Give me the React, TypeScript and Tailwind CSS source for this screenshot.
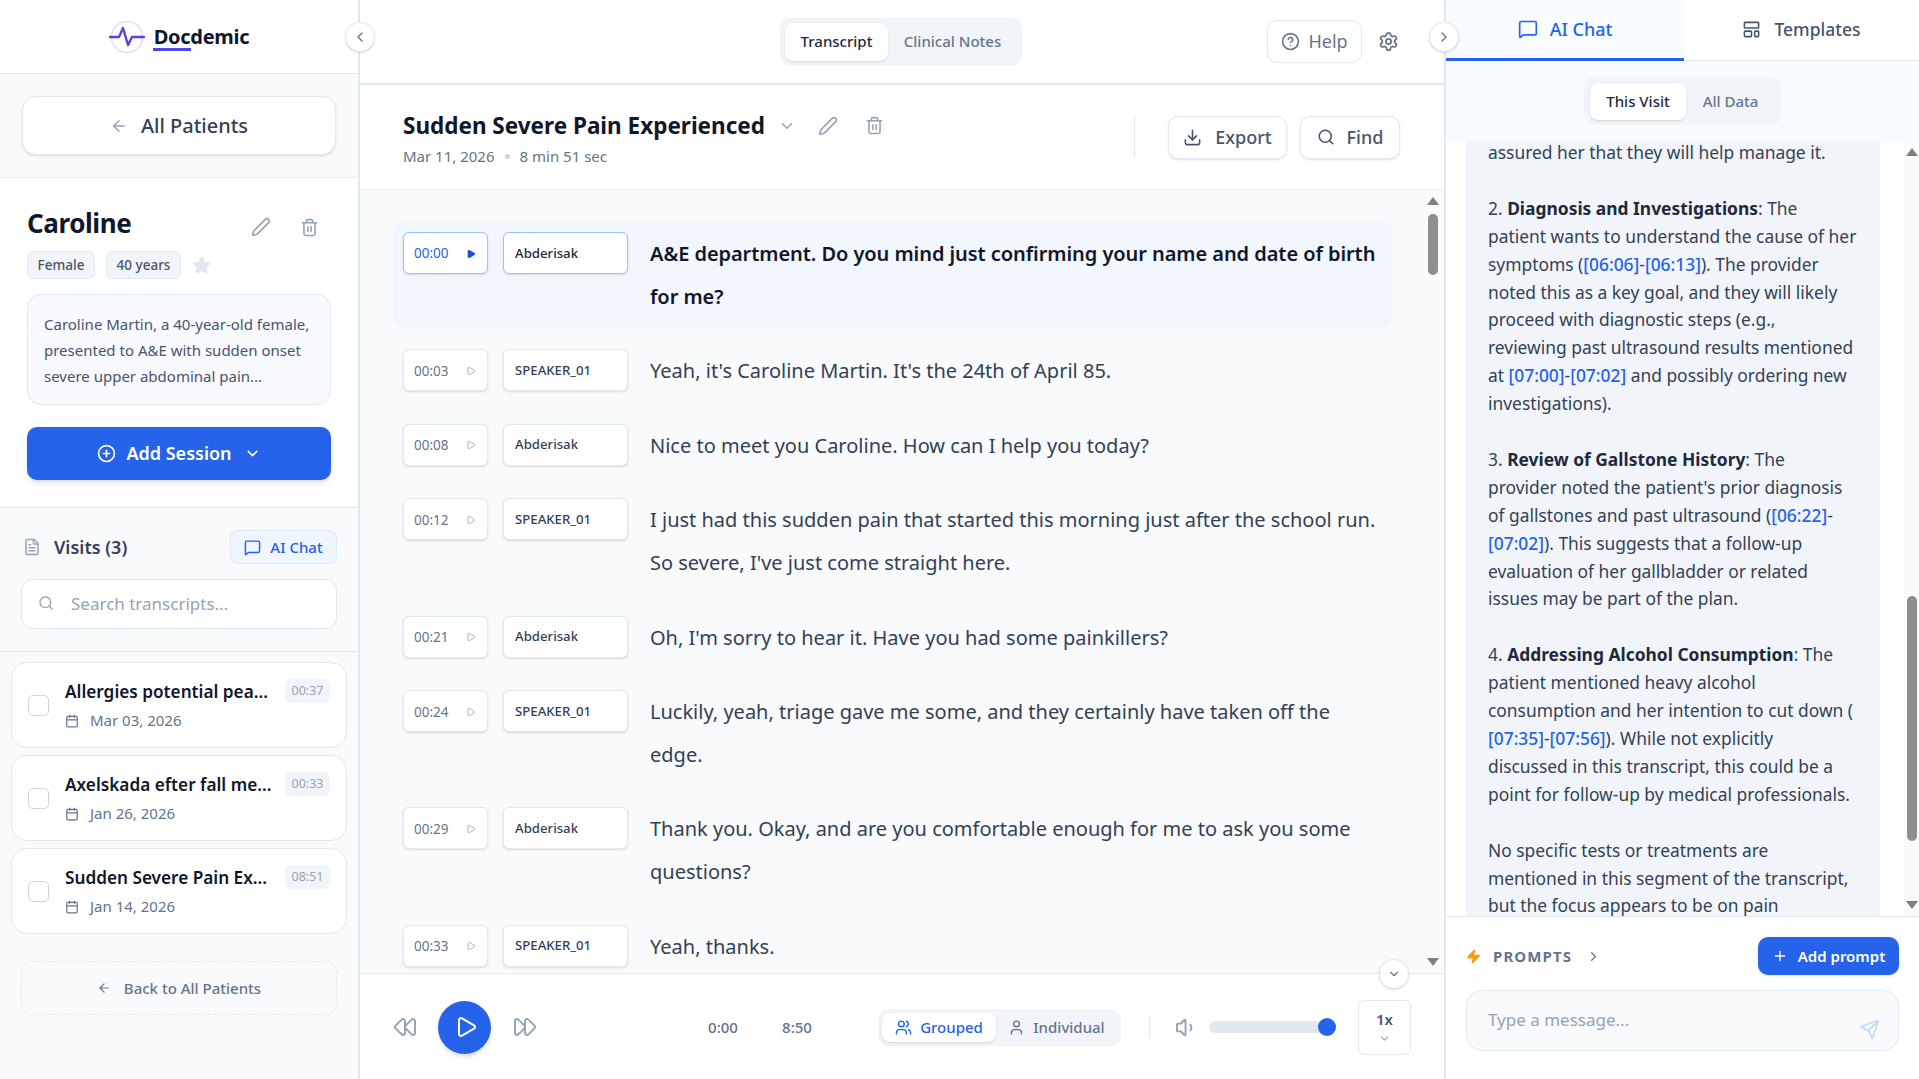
import React from 'react';
import {
  ArrowLeft, Pen, Trash2, Star, CirclePlus, ChevronDown, ChevronLeft, ChevronRight, FileText, MessageSquare, Search,
  Calendar, CircleHelp, Settings, Download, Play, Rewind, FastForward, Users, User, Volume1, LayoutTemplate, Zap, Plus, Send,
} from 'lucide-react';

const visits = [
  { title: 'Allergies potential pea…', date: 'Mar 03, 2026', dur: '00:37' },
  { title: 'Axelskada efter fall me…', date: 'Jan 26, 2026', dur: '00:33' },
  { title: 'Sudden Severe Pain Ex…', date: 'Jan 14, 2026', dur: '08:51' },
];

const rows = [
  { t: '00:00', s: 'Abderisak', x: 'A&E department. Do you mind just confirming your name and date of birth\nfor me?', active: true },
  { t: '00:03', s: 'SPEAKER_01', x: "Yeah, it's Caroline Martin. It's the 24th of April 85." },
  { t: '00:08', s: 'Abderisak', x: 'Nice to meet you Caroline. How can I help you today?' },
  { t: '00:12', s: 'SPEAKER_01', x: "I just had this sudden pain that started this morning just after the school run.\nSo severe, I've just come straight here." },
  { t: '00:21', s: 'Abderisak', x: "Oh, I'm sorry to hear it. Have you had some painkillers?" },
  { t: '00:24', s: 'SPEAKER_01', x: 'Luckily, yeah, triage gave me some, and they certainly have taken off the\nedge.' },
  { t: '00:29', s: 'Abderisak', x: 'Thank you. Okay, and are you comfortable enough for me to ask you some\nquestions?' },
  { t: '00:33', s: 'SPEAKER_01', x: 'Yeah, thanks.' },
];

const Ref = ({ children }: { children: React.ReactNode }) => (
  <span className="text-[#2563eb] font-medium">{children}</span>
);

const FakeScrollbar = ({ thumbTop, thumbH }: { thumbTop: number; thumbH: number }) => (
  <div className="w-[15px] shrink-0 flex flex-col items-center py-[7px] bg-[#fafafa]">
    <div className="w-0 h-0 border-x-[6px] border-x-transparent border-b-[8px] border-b-[#7f7f7f]" />
    <div className="flex-1 w-full flex flex-col items-center">
      <div style={{ height: thumbTop }} />
      <div className="w-[10px] rounded-full bg-[#8f8f8f]" style={{ height: thumbH }} />
    </div>
    <div className="w-0 h-0 border-x-[6px] border-x-transparent border-t-[8px] border-t-[#7f7f7f]" />
  </div>
);

const Sidebar = () => (
  <aside className="w-[360px] shrink-0 h-full flex flex-col border-r-2 border-[#e2e8f0] bg-[#f8fafc]">
    <div className="h-[74px] shrink-0 bg-white border-b border-[#e2e8f0] flex items-center justify-center gap-[9px]">
      <svg width="36" height="36" viewBox="0 0 36 36" fill="none">
        <circle cx="18" cy="18" r="15.5" stroke="#e0dcfb" strokeWidth="1.5" />
        <path d="M1 18h9l4-9 5 17 4-8h12" stroke="#4f46e5" strokeWidth="2.4" strokeLinejoin="round" strokeLinecap="round" />
      </svg>
      <div className="flex flex-col">
        <span className="text-[20px] leading-[28px] font-bold text-[#0f172a] tracking-[-0.3px]">Docdemic</span>
        <div className="w-[38px] h-[3px] bg-[#4f46e5] -mt-[3px] -ml-[1px]" />
      </div>
    </div>
    <div className="h-[104px] shrink-0 border-b border-[#e8edf3] px-[22px] flex items-center">
      <button className="w-full h-[59px] rounded-[14px] bg-white border border-[#e2e8f0] shadow-sm flex items-center justify-center gap-[13px] text-[20px] font-medium text-[#334155]">
        <ArrowLeft size={18} className="text-[#94a3b8]" />
        All Patients
      </button>
    </div>
    <div className="h-[330px] shrink-0 bg-white border-b border-[#e2e8f0] px-[27px] pt-[27px]">
      <div className="flex items-center justify-between pr-[12px]">
        <h1 className="text-[26px] leading-[36px] font-bold text-[#0f172a] tracking-[-0.4px]">Caroline</h1>
        <div className="flex items-center gap-[29px] text-[#94a3b8] mt-[8px]">
          <Pen size={20} />
          <Trash2 size={19} />
        </div>
      </div>
      <div className="flex items-center gap-[11px] mt-[10px]">
        <span className="h-[28px] w-[68px] justify-center flex items-center rounded-md bg-[#f1f5f9] border border-[#e2e8f0] text-[13.5px] text-[#475569] font-medium">Female</span>
        <span className="h-[28px] w-[75px] justify-center flex items-center rounded-md bg-[#f1f5f9] border border-[#e2e8f0] text-[13.5px] text-[#475569] font-medium">40 years</span>
        <Star size={19} className="text-[#e2e8f0] fill-[#e2e8f0]" />
      </div>
      <div className="mt-[15px] h-[111px] rounded-[14px] border border-[#e2e8f0] bg-[#f8faff] px-[16px] pt-[16px] text-[15px] leading-[26px] text-[#475569]">
        Caroline Martin, a 40-year-old female, presented to A&amp;E with sudden onset severe upper abdominal pain...
      </div>
      <button className="mt-[22px] w-full h-[53px] rounded-[10px] bg-[#2563eb] shadow-md flex items-center justify-center gap-[10px] text-white text-[18px] font-semibold">
        <CirclePlus size={19} />
        <span className="mr-[2px]">Add Session</span>
        <ChevronDown size={17} />
      </button>
    </div>
    <div className="h-[144px] shrink-0 border-b border-[#e2e8f0] px-[21px] pt-[22px]">
      <div className="flex items-center justify-between h-[34px]">
        <div className="flex items-center gap-[13px] pl-[2px]">
          <FileText size={18} className="text-[#94a3b8]" />
          <span className="text-[18px] font-semibold text-[#334155]">Visits (3)</span>
        </div>
        <button className="h-[34px] w-[107px] rounded-lg border border-[#dbeafe] bg-[#eff6ff] flex items-center justify-center gap-[9px] text-[#2563eb] text-[15px] font-medium">
          <MessageSquare size={17} />
          AI Chat
        </button>
      </div>
      <div className="mt-[15px] h-[50px] rounded-[12px] bg-white border border-[#e2e8f0] flex items-center px-[16px] gap-[17px]">
        <Search size={16} className="text-[#94a3b8] -mt-[3px]" />
        <span className="text-[17px] text-[#94a3b8]">Search transcripts...</span>
      </div>
    </div>
    <div className="flex flex-col gap-[7px] px-[11px] pt-[10px]">
      {visits.map((v) => (
        <div key={v.dur} className="h-[86px] rounded-[16px] bg-white border border-[#e2e8f0] flex items-center pl-[16px] pr-[16px]">
          <div className="w-[21px] h-[21px] rounded-[5px] border border-[#cbd5e1] shrink-0" />
          <div className="flex-1 ml-[16px] min-w-0">
            <div className="text-[17.2px] leading-[24px] font-semibold text-[#0f172a] whitespace-nowrap mt-[2px]">{v.title}</div>
            <div className="flex items-center gap-[11px] text-[15px] text-[#64748b] mt-[5px]">
              <Calendar size={14} className="text-[#64748b]" />
              {v.date}
            </div>
          </div>
          <span className="self-start mt-[16px] h-[24px] w-[45px] flex items-center justify-center rounded-md bg-[#f1f5f9] text-[12.5px] text-[#94a3b8] shrink-0">{v.dur}</span>
        </div>
      ))}
    </div>
    <div className="px-[21px] mt-[27px]">
      <button className="w-full h-[54px] rounded-[12px] border border-dashed border-[#e2e8f0] flex items-center justify-center gap-[13px] text-[15px] font-medium text-[#64748b]">
        <ArrowLeft size={14} />
        Back to All Patients
      </button>
    </div>
  </aside>
);

const TranscriptRow = ({ r }: { r: (typeof rows)[number] }) => (
  <div className={`flex gap-[22px] p-[11px] pl-[10px] rounded-[12px] ${r.active ? 'bg-[#f2f6fd]' : ''}`}>
    <div className="flex gap-[15px] shrink-0">
      <div className={`w-[85px] h-[42px] pt-[1px] rounded-[6px] bg-white shadow-sm flex items-center justify-between pl-[10px] pr-[11px] text-[13.5px] border ${r.active ? 'border-[#93c5fd] text-[#2563eb]' : 'border-[#e2e8f0] text-[#64748b]'}`}>
        {r.t}
        {r.active ? <Play size={10} className="text-[#1d4ed8] fill-[#1d4ed8]" /> : <Play size={10} className="text-[#94a3b8]" />}
      </div>
      <div className={`w-[125px] h-[42px] pt-[1px] rounded-[6px] bg-white shadow-sm flex items-center pl-[11px] text-[13.2px] font-medium border ${r.active ? 'border-[#93c5fd] text-[#1e293b]' : 'border-[#e2e8f0] text-[#334155]'}`}>
        {r.s}
      </div>
    </div>
    <p className={`flex-1 whitespace-pre text-[20px] leading-[42.6px] pt-[1px] -mb-[1px] ${r.active ? 'font-semibold text-[#0f172a] tracking-[-0.06px]' : 'text-[#334155]'}`}>{r.x}</p>
  </div>
);

const Center = () => (
  <main className="flex-1 min-w-0 h-full flex flex-col bg-white">
    <div className="h-[85px] shrink-0 border-b-2 border-[#e2e8f0] flex items-center relative">
      <div className="ml-[420px] h-[48px] w-[242px] rounded-[10px] bg-[#f1f5f9] p-[5px] flex items-center text-[15px]">
        <span className="w-[103px] h-[38px] rounded-lg bg-white shadow-sm flex items-center justify-center font-medium text-[#1e293b]">Transcript</span>
        <span className="flex-1 flex items-center justify-center font-medium text-[#64748b]">Clinical Notes</span>
      </div>
      <div className="ml-auto mr-[45px] flex items-center gap-[16px] text-[#64748b]">
        <button className="h-[43px] w-[95px] rounded-[10px] border border-[#e2e8f0] flex items-center justify-center gap-[8px] text-[18px]">
          <CircleHelp size={19} />
          Help
        </button>
        <Settings size={21} />
      </div>
    </div>
    <div className="h-[105px] shrink-0 border-b border-[#eef2f6] flex items-center pl-[43px] pr-[44px]">
      <div className="flex-1 pt-[3px]">
        <div className="flex items-center">
          <h2 className="text-[22.5px] leading-[32px] font-bold text-[#0f172a]">Sudden Severe Pain Experienced</h2>
          <ChevronDown size={18} className="text-[#94a3b8] ml-[13px]" />
          <Pen size={20} className="text-[#94a3b8] ml-[22px]" />
          <Trash2 size={19} className="text-[#94a3b8] ml-[27px]" />
        </div>
        <div className="flex items-center gap-[10px] text-[15px] text-[#64748b] mt-[3px]">
          Mar 11, 2026
          <span className="w-[5px] h-[5px] rounded-full bg-[#cbd5e1]" />
          8 min 51 sec
        </div>
      </div>
      <div className="w-px h-[42px] bg-[#e2e8f0] mr-[33px]" />
      <div className="flex items-center gap-[13px] text-[18px] font-medium text-[#475569]">
        <button className="h-[43px] w-[119px] rounded-[10px] border border-[#e2e8f0] shadow-sm flex items-center justify-center gap-[13px]">
          <Download size={19} />
          Export
        </button>
        <button className="h-[43px] w-[100px] rounded-[10px] border border-[#e2e8f0] shadow-sm flex items-center justify-center gap-[12px]">
          <Search size={18} />
          Find
        </button>
      </div>
    </div>
    <div className="flex-1 min-h-0 flex bg-[#f8fafc] border-b border-[#e2e8f0] pr-[4px]">
      <div className="flex-1 min-w-0 overflow-hidden pt-[31px] pl-[33px] pr-[33px] flex flex-col gap-[10px]">
        {rows.map((r) => <TranscriptRow key={r.t} r={r} />)}
      </div>
      <FakeScrollbar thumbTop={9} thumbH={61} />
    </div>
    <div className="h-[105px] shrink-0 flex items-center pt-[1px] text-[#64748b]">
      <Rewind size={24} className="ml-[33px] text-[#94a3b8]" />
      <button className="ml-[21px] w-[53px] h-[53px] rounded-full bg-[#2563eb] shadow-md flex items-center justify-center">
        <Play size={24} className="text-white ml-[2px]" />
      </button>
      <FastForward size={24} className="ml-[22px] text-[#94a3b8]" />
      <span className="ml-[166px] w-[40px] text-center text-[15px] font-medium">0:00</span>
      <span className="ml-[34px] w-[40px] text-center text-[15px] font-medium">8:50</span>
      <div className="ml-[61px] w-[243px] h-[37px] rounded-[10px] bg-[#f1f5f9] p-[4px] flex items-center text-[15px] font-medium">
        <span className="w-[114px] h-full rounded-lg bg-white shadow-sm flex items-center justify-center gap-[8px] text-[#2563eb]">
          <Users size={17} />
          Grouped
        </span>
        <span className="flex-1 flex items-center justify-center gap-[8px]">
          <User size={17} />
          Individual
        </span>
      </div>
      <div className="ml-[28px] w-px h-[22px] bg-[#e2e8f0]" />
      <Volume1 size={23} className="ml-[25px] text-[#94a3b8]" />
      <div className="ml-[11px] w-[127px] h-[12px] rounded-full bg-[#e2e8f0] flex items-center justify-end">
        <div className="w-[18px] h-[18px] rounded-full bg-[#2563eb]" />
      </div>
      <div className="ml-[22px] w-[53px] h-[55px] rounded-[6px] border border-[#e2e8f0] flex flex-col items-center justify-center gap-[4px]">
        <span className="text-[15px] leading-[18px] font-semibold text-[#475569]">1x</span>
        <ChevronDown size={13} className="text-[#94a3b8]" />
      </div>
    </div>
  </main>
);

const ChatPanel = () => (
  <aside className="w-[475px] shrink-0 h-full flex flex-col border-l-2 border-[#e2e8f0] bg-white">
    <div className="h-[61px] shrink-0 flex border-b border-[#e2e8f0]">
      <div className="w-[238px] h-[61px] border-b-[3px] border-[#2563eb] bg-[#f8fbff] flex items-center justify-center gap-[12px] text-[18px] font-medium text-[#2563eb]">
        <MessageSquare size={20} />
        AI Chat
      </div>
      <div className="flex-1 flex items-center justify-center gap-[13px] pb-[1px] text-[17.5px] font-medium text-[#475569]">
        <LayoutTemplate size={19} />
        Templates
      </div>
    </div>
    <div className="h-[80px] shrink-0 bg-[#f8fbff] flex items-center justify-center">
      <div className="w-[197px] h-[48px] rounded-[10px] bg-[#f1f5f9] p-[6px] flex items-center text-[15px] font-medium">
        <span className="w-[96px] h-[37px] rounded-lg bg-white shadow-sm flex items-center justify-center text-[#1e293b]">This Visit</span>
        <span className="flex-1 flex items-center justify-center text-[#64748b]">All Data</span>
      </div>
    </div>
    <div className="flex-1 min-h-0 flex">
      <div className="flex-1 min-w-0 overflow-hidden pl-[20px] pr-[24px]">
        <div className="bg-[#f1f5f9] pl-[22px] -mt-[2px] pb-[40px] text-[17.4px] leading-[27.9px] text-[#334155] whitespace-nowrap">
          <p>assured her that they will help manage it.</p>
          <p className="mt-[27.9px]">2. <b className="font-bold text-[#1e293b]">Diagnosis and Investigations</b>: The<br />patient wants to understand the cause of her<br />symptoms (<Ref>[06:06]</Ref>-<Ref>[06:13]</Ref>). The provider<br />noted this as a key goal, and they will likely<br />proceed with diagnostic steps (e.g.,<br />reviewing past ultrasound results mentioned<br />at <Ref>[07:00]</Ref>-<Ref>[07:02]</Ref> and possibly ordering new<br />investigations).</p>
          <p className="mt-[27.9px]">3. <b className="font-bold text-[#1e293b]">Review of Gallstone History</b>: The<br />provider noted the patient's prior diagnosis<br />of gallstones and past ultrasound (<Ref>[06:22]</Ref>-<br /><Ref>[07:02]</Ref>). This suggests that a follow-up<br />evaluation of her gallbladder or related<br />issues may be part of the plan.</p>
          <p className="mt-[27.9px]">4. <b className="font-bold text-[#1e293b]">Addressing Alcohol Consumption</b>: The<br />patient mentioned heavy alcohol<br />consumption and her intention to cut down (<br /><Ref>[07:35]</Ref>-<Ref>[07:56]</Ref>). While not explicitly<br />discussed in this transcript, this could be a<br />point for follow-up by medical professionals.</p>
          <p className="mt-[27.9px]">No specific tests or treatments are<br />mentioned in this segment of the transcript,<br />but the focus appears to be on pain</p>
        </div>
      </div>
      <FakeScrollbar thumbTop={440} thumbH={245} />
    </div>
    <div className="h-[163px] shrink-0 border-t border-[#e2e8f0] px-[20px] pt-[20px]">
      <div className="flex items-center justify-between">
        <div className="flex items-center gap-[10px] text-[#64748b]">
          <Zap size={15} className="text-[#f59e0b] fill-[#f59e0b]" />
          <span className="text-[15px] font-bold tracking-[1.1px] ml-[2px]">PROMPTS</span>
          <ChevronRight size={15} className="ml-[4px]" />
        </div>
        <button className="h-[38px] w-[141px] rounded-[10px] bg-[#2563eb] shadow-sm flex items-center justify-center gap-[10px] text-white text-[15px] font-semibold">
          <Plus size={16} />
          Add prompt
        </button>
      </div>
      <div className="mt-[15px] h-[61px] rounded-[16px] border border-[#e2e8f0] bg-[#f8fafc] flex items-start justify-between pl-[21px] pr-[18px]">
        <span className="text-[17px] text-[#94a3b8] mt-[16px]">Type a message...</span>
        <Send size={21} className="text-[#bfdbfe] mt-[28px]" />
      </div>
    </div>
  </aside>
);

const CircleBtn = ({ className, children }: { className: string; children: React.ReactNode }) => (
  <div className={`absolute w-[30px] h-[30px] rounded-full bg-white border border-[#e2e8f0] shadow-sm flex items-center justify-center text-[#64748b] ${className}`}>
    {children}
  </div>
);

export default function App() {
  return (
    <div className="relative w-screen h-screen overflow-hidden flex bg-white font-['Noto_Sans',sans-serif]">
      <Sidebar />
      <Center />
      <ChatPanel />
      <CircleBtn className="left-[345px] top-[22px]"><ChevronLeft size={16} /></CircleBtn>
      <CircleBtn className="left-[1429px] top-[22px]"><ChevronRight size={16} /></CircleBtn>
      <CircleBtn className="left-[1379px] top-[959px]"><ChevronDown size={14} /></CircleBtn>
    </div>
  );
}
